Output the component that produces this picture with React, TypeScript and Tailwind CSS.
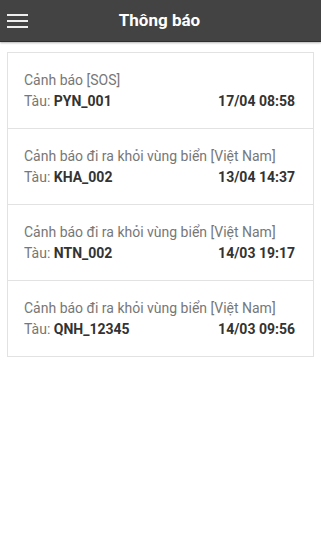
import React from "react";

const items = [
  { title: "Cảnh báo [SOS]", ship: "PYN_001", time: "17/04 08:58" },
  { title: "Cảnh báo đi ra khỏi vùng biển [Việt Nam]", ship: "KHA_002", time: "13/04 14:37" },
  { title: "Cảnh báo đi ra khỏi vùng biển [Việt Nam]", ship: "NTN_002", time: "14/03 19:17" },
  { title: "Cảnh báo đi ra khỏi vùng biển [Việt Nam]", ship: "QNH_12345", time: "14/03 09:56" },
];

export default function App() {
  return (
    <div className="w-[321px] min-h-[549px] bg-white" style={{ fontFamily: "Roboto, 'Liberation Sans', sans-serif" }}>
      <header className="relative h-[42px] bg-[#434343] flex items-center justify-center border-b border-[#2e2e2e] shadow-[0_1px_2px_rgba(0,0,0,0.3)]">
        <div className="absolute left-[7px] top-[14px] flex flex-col gap-[4px]">
          <span className="block w-[21px] h-[2px] bg-[#eeeeee]" />
          <span className="block w-[21px] h-[2px] bg-[#eeeeee]" />
          <span className="block w-[21px] h-[2px] bg-[#eeeeee]" />
        </div>
        <h1 className="text-[17px] font-bold text-white leading-none -ml-[2px]">Thông báo</h1>
      </header>
      <div className="mx-[7px] mt-[10px] border border-[#e2e2e2]">
        {items.map((it, i) => (
          <div key={i} className={`px-[16px] pt-[17px] pb-[16px] ${i > 0 ? "border-t border-[#e2e2e2]" : ""}`}>
            <div className="text-[14px] leading-[21px] text-[#777777]">{it.title}</div>
            <div className="flex justify-between text-[14px] leading-[21px] pr-[2px]">
              <span className="text-[#777777]">
                Tàu: <span className="font-bold text-[#333333]">{it.ship}</span>
              </span>
              <span className="font-bold text-[#333333]">{it.time}</span>
            </div>
          </div>
        ))}
      </div>
    </div>
  );
}
